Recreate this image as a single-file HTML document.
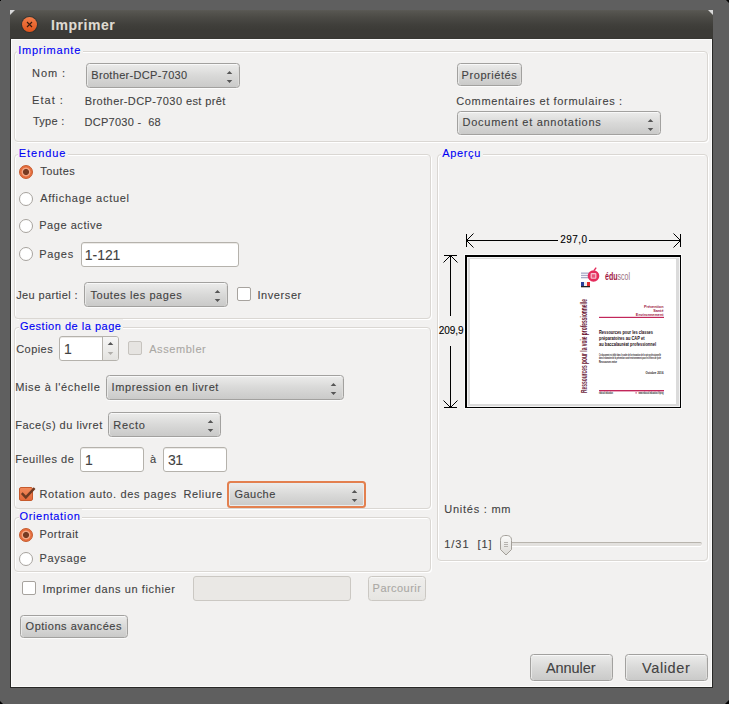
<!DOCTYPE html>
<html><head><meta charset="utf-8">
<style>
*{box-sizing:border-box;margin:0;padding:0}
html,body{width:729px;height:704px;overflow:hidden;background:#5f5f5f;font-family:"Liberation Sans",sans-serif;position:relative}
.a{position:absolute}
.t{position:absolute;font-size:12px;line-height:14px;color:#424242;white-space:pre;-webkit-text-stroke:0.1px currentColor}
.lbl{position:absolute;font-size:11px;letter-spacing:0.45px;line-height:14px;color:#0000f5;white-space:pre;background:#f2f1f0;padding:0 2px 0 1px}
.frame{position:absolute;border:1px solid #dad7d3;border-radius:4px;box-shadow:1px 1px 0 #fff, inset 1px 1px 0 #fff}
.combo,.btn{position:absolute;border:1px solid #a2a19f;border-radius:3.5px;background:linear-gradient(#ececeb,#d9d9d8 50%,#cacac9);box-shadow:inset 0 1px 0 #f8f8f8, inset 1px 0 0 #e9e9e8, inset -1px 0 0 #dddcda, 0 1px 0 rgba(255,255,255,.7)}
.entry{position:absolute;border:1px solid #b5b2ac;border-radius:3px;background:#fff;box-shadow:inset 0 1px 0 #eceae7}
.radio{position:absolute;width:14px;height:14px;border-radius:50%;border:1px solid #a7a39e;background:#fff}
.radio.on{border:1px solid #c65a2c;background:radial-gradient(circle at 50% 50%,#763b22 0,#763b22 2.7px,#f1a684 3.3px,#f1a684 4.0px,#e76f3f 4.8px)}
.check{position:absolute;width:14px;height:14px;border-radius:2px;border:1px solid #a7a39e;background:#fff}
</style></head><body>

<div class="a" style="left:0;top:0;width:1px;height:1px;background:#000"></div>
<div class="a" style="left:726px;top:0;width:3px;height:3px;background:#000;clip-path:polygon(0 0,100% 0,100% 100%)"></div>
<div class="a" style="left:0;top:701px;width:3px;height:3px;background:#000;clip-path:polygon(0 0,0 100%,100% 100%)"></div>
<div class="a" style="left:725px;top:700px;width:4px;height:4px;background:#000;clip-path:polygon(100% 0,100% 100%,0 100%)"></div>
<div class="a" style="left:10px;top:10px;width:703px;height:678px;background:#282826"></div>
<div class="a" style="left:10px;top:10px;width:703px;height:29px;background:linear-gradient(#5c5b56 0,#575651 1px,#4c4b46 7px,#403f3b 15px,#3c3b37 20px,#3c3b37 27px,#383733 29px)"></div>
<div class="a" style="left:10px;top:10px;width:5px;height:5px;background:#d8d8d8;clip-path:polygon(0 0,100% 0,0 100%)"></div>
<div class="a" style="left:708px;top:10px;width:5px;height:5px;background:#d8d8d8;clip-path:polygon(0 0,100% 0,100% 100%)"></div>
<div class="a" style="left:11px;top:39px;width:701px;height:648px;background:#fbfbfa"></div>
<div class="a" style="left:12px;top:40px;width:699px;height:646px;background:#f2f1f0"></div>
<svg class="a" style="left:20px;top:15px" width="19" height="19" viewBox="0 0 19 19">
<defs><linearGradient id="cg" x1="0" y1="0" x2="0" y2="1"><stop offset="0" stop-color="#f47e4a"/><stop offset="1" stop-color="#e0541c"/></linearGradient></defs>
<circle cx="9.5" cy="9.5" r="8.5" fill="#2a2926" opacity=".55"/>
<circle cx="9.5" cy="9.5" r="7.5" fill="url(#cg)"/>
<path d="M7 7L12 12M12 7L7 12" stroke="#3b1c0e" stroke-width="1.15"/>
</svg>
<div class="t" style="left:51px;top:17px;font-size:14px;line-height:16px;font-weight:bold;color:#dfdbd2;letter-spacing:0.55px">Imprimer</div>
<div class="frame" style="left:14px;top:51px;width:694px;height:91px"></div>
<div class="t" style="left:18.2px;top:43px;font-size:11px;letter-spacing:0.45px;letter-spacing:0.783px;line-height:14px;color:#0000f5;background:#f2f1f0;padding:0 2px 0 1px;margin-left:-1px">Imprimante</div>
<div class="t" style="left:32.0px;top:66px;font-size:11px;letter-spacing:0.45px;letter-spacing:0.950px;line-height:14px;">Nom :</div>
<div class="combo" style="left:86px;top:63px;width:154px;height:25px;"></div>
<svg class="a" style="left:226px;top:70px" width="7" height="14" viewBox="0 0 7 14"><path d="M0.7 4L3.5 0.9 6.3 4zM0.7 9.9L3.5 13 6.3 9.9z" fill="#565656"/></svg>
<div class="t" style="left:91.3px;top:68px;font-size:11px;letter-spacing:0.45px;letter-spacing:0.317px;line-height:14px;">Brother-DCP-7030</div>
<div class="t" style="left:32.0px;top:93px;font-size:11px;letter-spacing:0.45px;letter-spacing:1.050px;line-height:14px;">Etat :</div>
<div class="t" style="left:84.8px;top:94px;font-size:11px;letter-spacing:0.45px;letter-spacing:0.408px;line-height:14px;">Brother-DCP-7030 est prêt</div>
<div class="t" style="left:33.0px;top:114px;font-size:11px;letter-spacing:0.45px;letter-spacing:0.250px;line-height:14px;">Type :</div>
<div class="t" style="left:84.5px;top:115px;font-size:11px;letter-spacing:0.45px;letter-spacing:0.283px;line-height:14px;">DCP7030 -  68</div>
<div class="btn" style="left:457px;top:63px;width:65px;height:23px;"></div>
<div class="t" style="left:461.6px;top:68px;font-size:11px;letter-spacing:0.45px;letter-spacing:0.561px;line-height:14px;">Propriétés</div>
<div class="t" style="left:456.2px;top:94px;font-size:11px;letter-spacing:0.45px;letter-spacing:0.664px;line-height:14px;">Commentaires et formulaires :</div>
<div class="combo" style="left:457px;top:111px;width:204px;height:24px;"></div>
<svg class="a" style="left:647px;top:118px" width="7" height="14" viewBox="0 0 7 14"><path d="M0.7 4L3.5 0.9 6.3 4zM0.7 9.9L3.5 13 6.3 9.9z" fill="#565656"/></svg>
<div class="t" style="left:462.6px;top:115px;font-size:11px;letter-spacing:0.45px;letter-spacing:0.723px;line-height:14px;">Document et annotations</div>
<div class="frame" style="left:14px;top:154px;width:417px;height:165px"></div>
<div class="t" style="left:18.8px;top:146px;font-size:11px;letter-spacing:0.45px;letter-spacing:0.950px;line-height:14px;color:#0000f5;background:#f2f1f0;padding:0 2px 0 1px;margin-left:-1px">Etendue</div>
<div class="radio on" style="left:19px;top:165px"></div>
<div class="t" style="left:40.2px;top:164px;font-size:11px;letter-spacing:0.45px;letter-spacing:0.450px;line-height:14px;">Toutes</div>
<div class="radio" style="left:19px;top:192px"></div>
<div class="t" style="left:40.2px;top:191px;font-size:11px;letter-spacing:0.45px;letter-spacing:0.717px;line-height:14px;">Affichage actuel</div>
<div class="radio" style="left:19px;top:219px"></div>
<div class="t" style="left:39.2px;top:218px;font-size:11px;letter-spacing:0.45px;letter-spacing:0.550px;line-height:14px;">Page active</div>
<div class="radio" style="left:19px;top:247px"></div>
<div class="t" style="left:39.2px;top:247px;font-size:11px;letter-spacing:0.45px;letter-spacing:0.700px;line-height:14px;">Pages</div>
<div class="entry" style="left:81px;top:242px;width:158px;height:25px;"></div>
<div class="t" style="left:84.8px;top:247px;font-size:14px;letter-spacing:-0.050px;line-height:16px;">1-121</div>
<div class="t" style="left:16.2px;top:288px;font-size:11px;letter-spacing:0.45px;letter-spacing:0.367px;line-height:14px;">Jeu partiel :</div>
<div class="combo" style="left:84px;top:282px;width:144px;height:25px;"></div>
<svg class="a" style="left:214px;top:289px" width="7" height="14" viewBox="0 0 7 14"><path d="M0.7 4L3.5 0.9 6.3 4zM0.7 9.9L3.5 13 6.3 9.9z" fill="#565656"/></svg>
<div class="t" style="left:90.4px;top:288px;font-size:11px;letter-spacing:0.45px;letter-spacing:0.583px;line-height:14px;">Toutes les pages</div>
<div class="check" style="left:237px;top:287px;"></div>
<div class="t" style="left:257.4px;top:288px;font-size:11px;letter-spacing:0.45px;letter-spacing:0.593px;line-height:14px;">Inverser</div>
<div class="frame" style="left:14px;top:327px;width:417px;height:182px"></div>
<div class="t" style="left:19.9px;top:319px;font-size:11px;letter-spacing:0.45px;letter-spacing:0.509px;line-height:14px;color:#0000f5;background:#f2f1f0;padding:0 2px 0 1px;margin-left:-1px">Gestion de la page</div>
<div class="t" style="left:16.2px;top:342px;font-size:11px;letter-spacing:0.45px;letter-spacing:0.450px;line-height:14px;">Copies</div>
<div class="entry" style="left:59px;top:336px;width:60px;height:25px;"></div>
<div class="a" style="left:102px;top:337px;width:16px;height:23px;border-left:1px solid #b5b2ac;border-radius:0 2px 2px 0;background:linear-gradient(#f6f6f5,#e4e3e0)"></div>
<svg class="a" style="left:107px;top:341px" width="7" height="15" viewBox="0 0 7 15"><path d="M0.7 4L3.5 1 6.3 4z" fill="#565656"/><path d="M0.7 11L3.5 14 6.3 11z" fill="#b0aeaa"/></svg>
<div class="t" style="left:64px;top:341px;font-size:14px;line-height:16px;">1</div>
<div class="check" style="left:128px;top:341px;background:#e6e4e1;border-color:#c6c3be"></div>
<div class="t" style="left:149.2px;top:342px;font-size:11px;letter-spacing:0.45px;letter-spacing:0.575px;line-height:14px;color:#aaa8a4;">Assembler</div>
<div class="t" style="left:15.2px;top:380px;font-size:11px;letter-spacing:0.45px;letter-spacing:0.650px;line-height:14px;">Mise à l'échelle</div>
<div class="combo" style="left:106px;top:375px;width:238px;height:25px;"></div>
<svg class="a" style="left:330px;top:382px" width="7" height="14" viewBox="0 0 7 14"><path d="M0.7 4L3.5 0.9 6.3 4zM0.7 9.9L3.5 13 6.3 9.9z" fill="#565656"/></svg>
<div class="t" style="left:111.5px;top:380px;font-size:11px;letter-spacing:0.45px;letter-spacing:0.608px;line-height:14px;">Impression en livret</div>
<div class="t" style="left:15.2px;top:418px;font-size:11px;letter-spacing:0.45px;letter-spacing:0.512px;line-height:14px;">Face(s) du livret</div>
<div class="combo" style="left:108px;top:412px;width:113px;height:25px;"></div>
<svg class="a" style="left:207px;top:419px" width="7" height="14" viewBox="0 0 7 14"><path d="M0.7 4L3.5 0.9 6.3 4zM0.7 9.9L3.5 13 6.3 9.9z" fill="#565656"/></svg>
<div class="t" style="left:113.3px;top:418px;font-size:11px;letter-spacing:0.45px;letter-spacing:0.700px;line-height:14px;">Recto</div>
<div class="t" style="left:15.2px;top:452px;font-size:11px;letter-spacing:0.45px;letter-spacing:0.550px;line-height:14px;">Feuilles de</div>
<div class="entry" style="left:80px;top:447px;width:64px;height:25px;"></div>
<div class="t" style="left:85px;top:452px;font-size:14px;line-height:16px;">1</div>
<div class="t" style="left:150px;top:452px;font-size:11px;letter-spacing:0.45px;line-height:14px;">à</div>
<div class="entry" style="left:163px;top:447px;width:64px;height:25px;"></div>
<div class="t" style="left:168px;top:452px;font-size:14px;line-height:16px;letter-spacing:-0.5px">31</div>
<div class="check" style="left:19px;top:487px;border-color:#c65a2c;background:linear-gradient(#f18a5c,#e4693a)"></div>
<svg class="a" style="left:19px;top:485px" width="18" height="16" viewBox="0 0 18 16"><path d="M2.8 8.2L6.8 12.4 15.6 3.2" fill="none" stroke="#6f3a22" stroke-width="2.4"/></svg>
<div class="t" style="left:39.5px;top:487px;font-size:11px;letter-spacing:0.45px;letter-spacing:0.624px;line-height:14px;">Rotation auto. des pages</div>
<div class="t" style="left:183.5px;top:487px;font-size:11px;letter-spacing:0.45px;letter-spacing:0.617px;line-height:14px;">Reliure</div>
<div class="combo" style="left:227px;top:481px;width:139px;height:27px;border:2px solid #e3804f;box-shadow:inset 0 0 0 1px #e9eced"></div>
<svg class="a" style="left:351px;top:489px" width="7" height="14" viewBox="0 0 7 14"><path d="M0.7 4L3.5 0.9 6.3 4zM0.7 9.9L3.5 13 6.3 9.9z" fill="#565656"/></svg>
<div class="t" style="left:234.5px;top:487px;font-size:11px;letter-spacing:0.45px;letter-spacing:0.450px;line-height:14px;">Gauche</div>
<div class="frame" style="left:14px;top:517px;width:417px;height:55px"></div>
<div class="t" style="left:19.5px;top:509px;font-size:11px;letter-spacing:0.45px;letter-spacing:0.650px;line-height:14px;color:#0000f5;background:#f2f1f0;padding:0 2px 0 1px;margin-left:-1px">Orientation</div>
<div class="radio on" style="left:19px;top:528px"></div>
<div class="t" style="left:39.5px;top:527px;font-size:11px;letter-spacing:0.45px;letter-spacing:0.450px;line-height:14px;">Portrait</div>
<div class="radio" style="left:19px;top:552px"></div>
<div class="t" style="left:39.5px;top:551px;font-size:11px;letter-spacing:0.45px;letter-spacing:0.617px;line-height:14px;">Paysage</div>
<div class="check" style="left:22px;top:581px;"></div>
<div class="t" style="left:42.6px;top:582px;font-size:11px;letter-spacing:0.45px;letter-spacing:0.624px;line-height:14px;">Imprimer dans un fichier</div>
<div class="entry" style="left:193px;top:576px;width:158px;height:25px;background:#eae8e5;border-color:#cbc8c3;box-shadow:none"></div>
<div class="btn" style="left:368px;top:576px;width:58px;height:25px;background:linear-gradient(#efeeec,#e6e5e2);border-color:#cbc8c3;box-shadow:inset 0 1px 0 #f7f7f6"></div>
<div class="t" style="left:372.6px;top:581px;font-size:11px;letter-spacing:0.45px;letter-spacing:0.450px;line-height:14px;color:#aaa8a4;">Parcourir</div>
<div class="btn" style="left:20px;top:615px;width:108px;height:23px;"></div>
<div class="t" style="left:25.6px;top:619px;font-size:11px;letter-spacing:0.45px;letter-spacing:0.517px;line-height:14px;">Options avancées</div>
<div class="frame" style="left:437px;top:154px;width:271px;height:407px"></div>
<div class="t" style="left:442.2px;top:146px;font-size:11px;letter-spacing:0.45px;letter-spacing:0.650px;line-height:14px;color:#0000f5;background:#f2f1f0;padding:0 2px 0 1px;margin-left:-1px">Aperçu</div>
<svg class="a" style="left:436px;top:225px" width="260" height="190" viewBox="436 225 260 190">
 <g stroke="#000" stroke-width="1" fill="none" shape-rendering="crispEdges">
  <line x1="466.5" y1="234" x2="466.5" y2="247"/>
  <line x1="680.5" y1="234" x2="680.5" y2="247"/>
  <line x1="467" y1="240.5" x2="558" y2="240.5"/>
  <line x1="589" y1="240.5" x2="680" y2="240.5"/>
  <line x1="444" y1="255.5" x2="457" y2="255.5"/>
  <line x1="444" y1="407.5" x2="457" y2="407.5"/>
  <line x1="450.5" y1="256" x2="450.5" y2="316"/>
  <line x1="450.5" y1="346" x2="450.5" y2="407"/>
 </g>
 <g stroke="#000" stroke-width="1" fill="none">
  <path d="M473.5 233.5L466.5 240.5 473.5 247.5M673.5 233.5L680.5 240.5 673.5 247.5"/>
  <path d="M443.5 262.5L450.5 255.5 457.5 262.5M443.5 400.5L450.5 407.5 457.5 400.5"/>
 </g>
 <rect x="464" y="254" width="218" height="155" fill="#fbfbfb"/>
 <rect x="465" y="255" width="216" height="153" fill="#000"/>
 <rect x="467" y="257" width="213" height="150" fill="#f4f4f4"/>
 <rect x="468" y="258" width="211" height="148" fill="#dbdbdb"/>
 <rect x="470" y="259" width="206" height="145" fill="#fff"/>
</svg>

<div class="t" style="left:560.2px;top:234px;font-size:10px;letter-spacing:0.450px;line-height:12px;color:#000;">297,0</div>
<div class="t" style="left:438.8px;top:325px;font-size:10px;letter-spacing:-0.050px;line-height:12px;color:#000;">209,9</div>
<svg class="a" style="left:570px;top:258px" width="106" height="146" viewBox="570 258 106 146">
 <g fill="#a9abc8"><rect x="581" y="272.5" width="8" height="1.3"/><rect x="581" y="274.8" width="9" height="1.3"/><rect x="581" y="277" width="8" height="1.3"/></g>
 <circle cx="593.5" cy="276" r="5.8" fill="#e42c5c"/>
 <rect x="590.6" y="273" width="5.8" height="5.8" rx="1" fill="#f6c0cf"/><rect x="591.8" y="274.3" width="3.4" height="3.4" fill="#e8557a"/>
 <path d="M594 270.5 L596.2 267.6" stroke="#e42c5c" stroke-width="1.3"/>
 <rect x="581" y="282" width="3" height="4" fill="#2a3f9a"/><rect x="584" y="282" width="3" height="4" fill="#eee"/><rect x="587" y="282" width="3" height="4" fill="#e32b2b"/>
 <rect x="581" y="286" width="9" height="1.3" fill="#222"/>
 <text x="605" y="280" font-family="Liberation Sans" font-weight="bold" font-size="10" textLength="25" lengthAdjust="spacingAndGlyphs" fill="#a0143f">édu<tspan fill="#9a7080" font-weight="normal">scol</tspan></text>
 <text transform="translate(587.3,393) rotate(-90)" font-family="Liberation Sans" font-weight="bold" font-size="9.5" textLength="94" lengthAdjust="spacingAndGlyphs" fill="#6a1634"><tspan fill="#6f2a42">Ressources </tspan>pour la voie professionnelle</text>
 <g font-family="Liberation Sans" font-weight="bold" fill="#9b1a44" font-size="3.8" text-anchor="end">
  <text x="663.5" y="307.5">Prévention</text>
  <text x="663.5" y="311.5">Santé</text>
  <text x="663.5" y="315.5">Environnement</text>
 </g>
 <rect x="599" y="316.8" width="65" height="1.2" fill="#c2265a"/>
 <g font-family="Liberation Sans" font-weight="bold" fill="#1c0c12" font-size="5.2">
  <text x="599" y="333.8" textLength="54" lengthAdjust="spacingAndGlyphs">Ressources pour les classes</text>
  <text x="599" y="339.8" textLength="45.5" lengthAdjust="spacingAndGlyphs">préparatoires au CAP et</text>
  <text x="599" y="345.8" textLength="57" lengthAdjust="spacingAndGlyphs">au baccalauréat professionnel</text>
 </g>
 <g font-family="Liberation Sans" font-weight="bold" fill="#1a1014" font-size="2.8">
  <text x="599" y="356.2" textLength="62" lengthAdjust="spacingAndGlyphs">Ce document est édité dans le cadre de la rénovation de la voie professionnelle</text>
  <text x="599" y="359.4" textLength="62" lengthAdjust="spacingAndGlyphs">dans le domaine de la prévention santé environnement pour les élèves de lycée</text>
  <text x="599" y="362.6" textLength="18" lengthAdjust="spacingAndGlyphs">Ressources mise</text>
 </g>
 <text x="663.5" y="374.2" text-anchor="end" font-family="Liberation Sans" font-weight="bold" fill="#2a1a20" font-size="3.4" textLength="18" lengthAdjust="spacingAndGlyphs">Octobre 2016</text>
 <rect x="599" y="390" width="65" height="1.4" fill="#c2265a"/>
 <g font-family="Liberation Sans" font-weight="bold" fill="#111" font-size="2.6">
  <text x="599" y="394" textLength="14" lengthAdjust="spacingAndGlyphs">eduscol.education</text>
  <text x="663.5" y="394" text-anchor="end" textLength="25" lengthAdjust="spacingAndGlyphs">www.eduscol.education.fr/prog</text>
 </g>
 <rect x="635.5" y="392.3" width="1.2" height="1.2" fill="#c2265a"/>
</svg>

<div class="t" style="left:444.3px;top:502px;font-size:11px;letter-spacing:0.45px;letter-spacing:0.750px;line-height:14px;">Unités : mm</div>
<div class="t" style="left:444.3px;top:537px;font-size:11px;letter-spacing:0.45px;letter-spacing:0.950px;line-height:14px;">1/31  [1]</div>
<div class="a" style="left:500px;top:542px;width:202px;height:5px;border-radius:3px;background:#fff"></div>
<div class="a" style="left:500px;top:542px;width:202px;height:4px;border-radius:2px;background:#e3e1de;border-top:1px solid #b8b4ad"></div>
<svg class="a" style="left:499px;top:534px" width="14" height="22" viewBox="0 0 14 22">
 <defs><linearGradient id="sg" x1="0" y1="0" x2="0" y2="1"><stop offset="0" stop-color="#fbfbfa"/><stop offset="1" stop-color="#dcdad6"/></linearGradient></defs>
 <path d="M1.5 6.5 C1.5 2.5 3.5 1.5 7 1.5 C10.5 1.5 12.5 2.5 12.5 6.5 L12.5 15.5 L7 21 L1.5 15.5 Z" fill="url(#sg)" stroke="#a39f99" stroke-width="1"/>
 <g stroke="#a7a39e" stroke-width="0.8"><line x1="5" y1="8.5" x2="9" y2="8.5"/><line x1="5" y1="10.5" x2="9" y2="10.5"/><line x1="5" y1="12.5" x2="9" y2="12.5"/></g>
</svg>
<div class="btn" style="left:530px;top:654px;width:83px;height:27px;"></div>
<div class="t" style="left:545.9px;top:660px;font-size:14.5px;letter-spacing:-0.050px;line-height:16px;">Annuler</div>
<div class="btn" style="left:625px;top:654px;width:83px;height:27px;"></div>
<div class="t" style="left:642.0px;top:660px;font-size:14.5px;letter-spacing:0.617px;line-height:16px;">Valider</div>
</body></html>
